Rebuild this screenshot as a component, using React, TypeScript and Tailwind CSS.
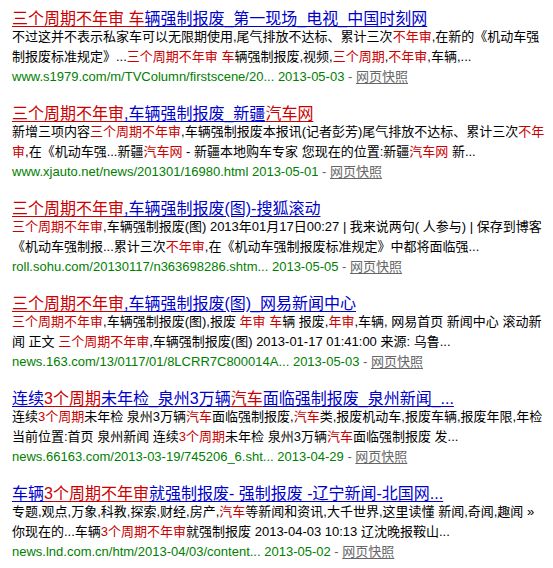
import React from "react";

type Seg = [string, boolean?];

const R = "text-[#c00]";

function Title({ segs }: { segs: Seg[] }) {
  return (
    <div className="text-[16px] leading-[17px] h-[17px] whitespace-nowrap">
      {segs.map(([t, red], i) => (
        <span key={i} className={`underline underline-offset-[2px] ${red ? R : "text-[#00c]"}`}>
          {t}
        </span>
      ))}
    </div>
  );
}

function Line({ segs }: { segs: Seg[] }) {
  return (
    <div className="text-[13px] leading-[20px] h-[20px] whitespace-nowrap text-black">
      {segs.map(([t, red], i) => (
        <span key={i} className={red ? R : ""}>
          {t}
        </span>
      ))}
    </div>
  );
}

function Url({ url, date }: { url: string; date: string }) {
  return (
    <div className="text-[13px] leading-[20px] h-[20px] whitespace-nowrap">
      <span className="text-[#008000]">
        {url} {date}
      </span>
      <span className="text-[#666]"> - </span>
      <span className="text-[#666] underline underline-offset-[2px]">网页快照</span>
    </div>
  );
}

type Result = { title: Seg[]; lines: Seg[][]; url: string; date: string };

const results: Result[] = [
  {
    title: [["三个周期不年审 车", true], ["辆强制报废_第一现场_电视_中国时刻网"]],
    lines: [
      [["不过这并不表示私家车可以无限期使用,尾气排放不达标、累计三次"], ["不年审", true], [",在新的《机动车强"]],
      [
        ["制报废标准规定》..."],
        ["三个周期不年审 车", true],
        ["辆强制报废,视频,"],
        ["三个周期", true],
        [","],
        ["不年审", true],
        [",车辆,..."],
      ],
    ],
    url: "www.s1979.com/m/TVColumn/firstscene/20...",
    date: "2013-05-03",
  },
  {
    title: [["三个周期不年审", true], [",车辆强制报废_新疆"], ["汽车网", true]],
    lines: [
      [["新增三项内容"], ["三个周期不年审", true], [",车辆强制报废本报讯(记者彭芳)尾气排放不达标、累计三次"], ["不年", true]],
      [
        ["审", true],
        [",在《机动车强...新疆"],
        ["汽车网", true],
        [" - 新疆本地购车专家 您现在的位置:新疆"],
        ["汽车网", true],
        [" 新..."],
      ],
    ],
    url: "www.xjauto.net/news/201301/16980.html",
    date: "2013-05-01",
  },
  {
    title: [["三个周期不年审", true], [",车辆强制报废(图)-搜狐滚动"]],
    lines: [
      [["三个周期不年审", true], [",车辆强制报废(图) 2013年01月17日00:27 | 我来说两句( 人参与) | 保存到博客"]],
      [["《机动车强制报...累计三次"], ["不年审", true], [",在《机动车强制报废标准规定》中都将面临强..."]],
    ],
    url: "roll.sohu.com/20130117/n363698286.shtm...",
    date: "2013-05-05",
  },
  {
    title: [["三个周期不年审", true], [",车辆强制报废(图)_网易新闻中心"]],
    lines: [
      [
        ["三个周期不年审", true],
        [",车辆强制报废(图),报废 "],
        ["年审 车", true],
        ["辆 报废,"],
        ["年审", true],
        [",车辆, 网易首页 新闻中心 滚动新"],
      ],
      [["闻 正文 "], ["三个周期不年审", true], [",车辆强制报废(图) 2013-01-17 01:41:00 来源: 乌鲁..."]],
    ],
    url: "news.163.com/13/0117/01/8LCRR7C800014A...",
    date: "2013-05-03",
  },
  {
    title: [["连续"], ["3个周期", true], ["未年检_泉州3万辆"], ["汽车", true], ["面临强制报废_泉州新闻_..."]],
    lines: [
      [
        ["连续"],
        ["3个周期", true],
        ["未年检 泉州3万辆"],
        ["汽车", true],
        ["面临强制报废,"],
        ["汽车", true],
        ["类,报废机动车,报废车辆,报废年限,年检"],
      ],
      [["当前位置:首页 泉州新闻 连续"], ["3个周期", true], ["未年检 泉州3万辆"], ["汽车", true], ["面临强制报废 发..."]],
    ],
    url: "news.66163.com/2013-03-19/745206_6.sht...",
    date: "2013-04-29",
  },
  {
    title: [["车辆"], ["3个周期不年审", true], ["就强制报废- 强制报废 -辽宁新闻-北国网..."]],
    lines: [
      [["专题,观点,万象,科教,探索,财经,房产,"], ["汽车", true], ["等新闻和资讯,大千世界,这里读懂 新闻,奇闻,趣闻 »"]],
      [["你现在的...车辆"], ["3个周期不年审", true], ["就强制报废 2013-04-03 10:13 辽沈晚报鞍山..."]],
    ],
    url: "news.lnd.com.cn/htm/2013-04/03/content...",
    date: "2013-05-02",
  },
];

export default function App() {
  return (
    <div
      className="w-[553px] h-[568px] bg-white overflow-hidden pt-[10px] pl-[12px]"
      style={{ fontFamily: '"Liberation Sans", Arial, "Noto Sans CJK SC", sans-serif' }}
    >
      <div className="flex flex-col gap-[18px]">
        {results.map((r, i) => (
          <div key={i} className="flex flex-col">
            <Title segs={r.title} />
            {r.lines.map((l, j) => (
              <Line key={j} segs={l} />
            ))}
            <Url url={r.url} date={r.date} />
          </div>
        ))}
      </div>
    </div>
  );
}
